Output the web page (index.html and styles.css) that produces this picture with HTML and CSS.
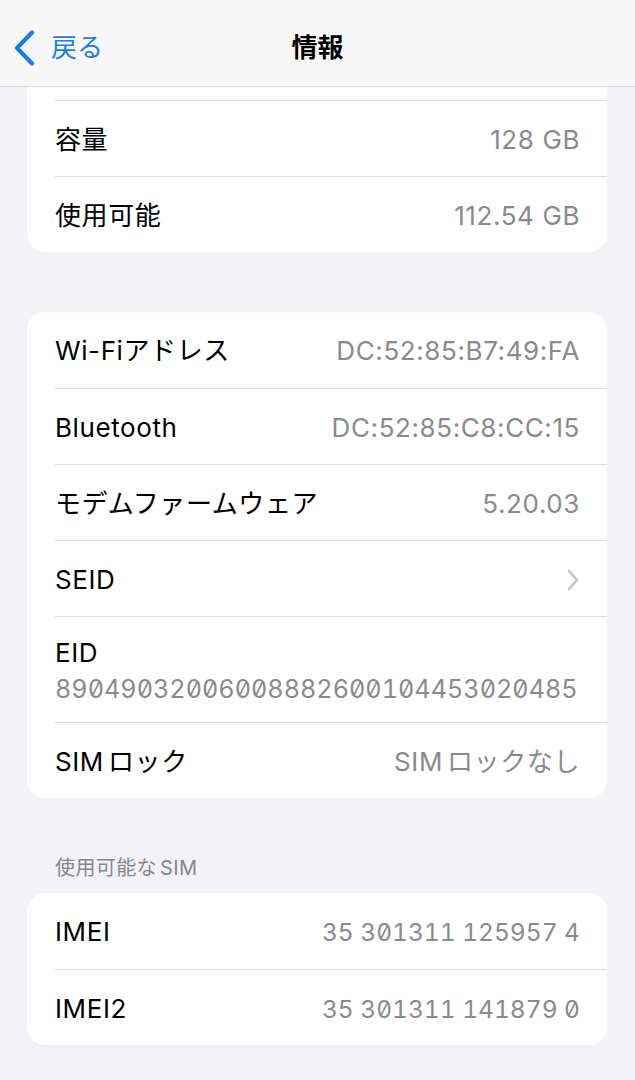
FILE: index.html
```html
<!DOCTYPE html>
<html lang="ja">
<head>
<meta charset="utf-8">
<title>情報</title>
<link rel="stylesheet" href="styles.css">
</head>
<body>
<header class="nav">
  <div class="back">
    <svg class="chev" width="24" height="36" viewBox="0 0 24 36"><path d="M19 2.5 L4 18 L19 33.5" fill="none" stroke="#1c7ee4" stroke-width="4.2" stroke-linecap="round" stroke-linejoin="round"/></svg>
    <span class="back-text">戻る</span>
  </div>
  <div class="title">情報</div>
  <div class="spacer"></div>
</header>
<main class="content">
  <section class="card">
    <div class="cut"></div>
    <div class="row"><div class="inner"><span class="label">容量</span><span class="value">128 GB</span></div></div>
    <div class="row"><div class="inner"><span class="label">使用可能</span><span class="value">112.54 GB</span></div></div>
  </section>

  <section class="card gap">
    <div class="row first"><div class="inner"><span class="label">Wi-Fiアドレス</span><span class="value">DC:52:85:B7:49:FA</span></div></div>
    <div class="row"><div class="inner"><span class="label">Bluetooth</span><span class="value">DC:52:85:C8:CC:15</span></div></div>
    <div class="row"><div class="inner"><span class="label">モデムファームウェア</span><span class="value">5.20.03</span></div></div>
    <div class="row"><div class="inner"><span class="label">SEID</span>
      <svg class="disc" width="14" height="24" viewBox="0 0 14 24"><path d="M3 3 L11 12 L3 21" fill="none" stroke="#c4c4c7" stroke-width="2.6" stroke-linecap="round" stroke-linejoin="round"/></svg>
    </div></div>
    <div class="row"><div class="inner tall"><span class="label">EID</span><span class="mono eid">89049032006008882600104453020485</span></div></div>
    <div class="row"><div class="inner"><span class="label">SIM<span class="jp-gap">ロック</span></span><span class="value">SIM<span class="jp-gap">ロックなし</span></span></div></div>
  </section>

  <div class="section-head">使用可能な<span class="jp-gap-s">SIM</span></div>
  <section class="card">
    <div class="row first"><div class="inner"><span class="label">IMEI</span><span class="mono imei">35 301311 125957 4</span></div></div>
    <div class="row"><div class="inner"><span class="label">IMEI2</span><span class="mono imei">35 301311 141879 0</span></div></div>
  </section>
</main>
</body>
</html>
```

FILE: styles.css
```css
* { box-sizing: border-box; }
html, body {
  margin: 0;
  padding: 0;
  background: #f2f2f7;
  font-family: "Inter", "Noto Sans CJK JP", sans-serif;
  color: #000;
}
body { width: 635px; height: 1080px; overflow: hidden; }

.nav {
  height: 87px;
  background: #f7f7f7;
  border-bottom: 1px solid #d6d6d8;
  display: flex;
  align-items: center;
  padding: 10px 0 0 0;
}
.back {
  width: 200px;
  display: flex;
  align-items: center;
  padding-left: 13px;
}
.chev { display: block; }
.back-text {
  color: #1c7ee4;
  font-size: 26px;
  margin-left: 14px;
  line-height: 1;
}
.title {
  flex: 1;
  text-align: center;
  font-size: 26px;
  font-weight: 700;
  line-height: 1;
}
.spacer { width: 200px; }

.content { padding: 0 28px 0 27px; }

.card {
  background: #fff;
  border-radius: 18px;
  overflow: hidden;
}
.card:first-child { border-radius: 0 0 18px 18px; }
.card.gap { margin-top: 60px; }
.cut { height: 13px; }

.row { padding-left: 28px; }
.inner {
  height: 76px;
  border-top: 1px solid #dddde0;
  padding: 2px 27px 0 0;
  display: flex;
  align-items: center;
  justify-content: space-between;
}
.row.first .inner { border-top: none; }
.inner.tall {
  height: 106px;
  flex-direction: column;
  align-items: flex-start;
  justify-content: center;
  gap: 4px;
}
.label, .value {
  font-size: 26px;
  line-height: 32px;
  letter-spacing: 0.6px;
  white-space: nowrap;
}
.value { color: #8a8a8e; }
.jp-gap { margin-left: 4px; }
.jp-gap-s { margin-left: 3px; }
.disc { display: block; }
.mono {
  font-family: "Inter", sans-serif;
  font-feature-settings: "tnum" 1, "zero" 1;
  font-variant-numeric: tabular-nums slashed-zero;
  color: #8a8a8e;
  white-space: nowrap;
}
.eid { font-size: 25.2px; line-height: 32px; }
.imei { font-size: 24.5px; line-height: 32px; }

.section-head {
  padding: 58px 0 13px 28px;
  font-size: 20px;
  line-height: 24px;
  letter-spacing: 0.4px;
  color: #86868b;
}
```
